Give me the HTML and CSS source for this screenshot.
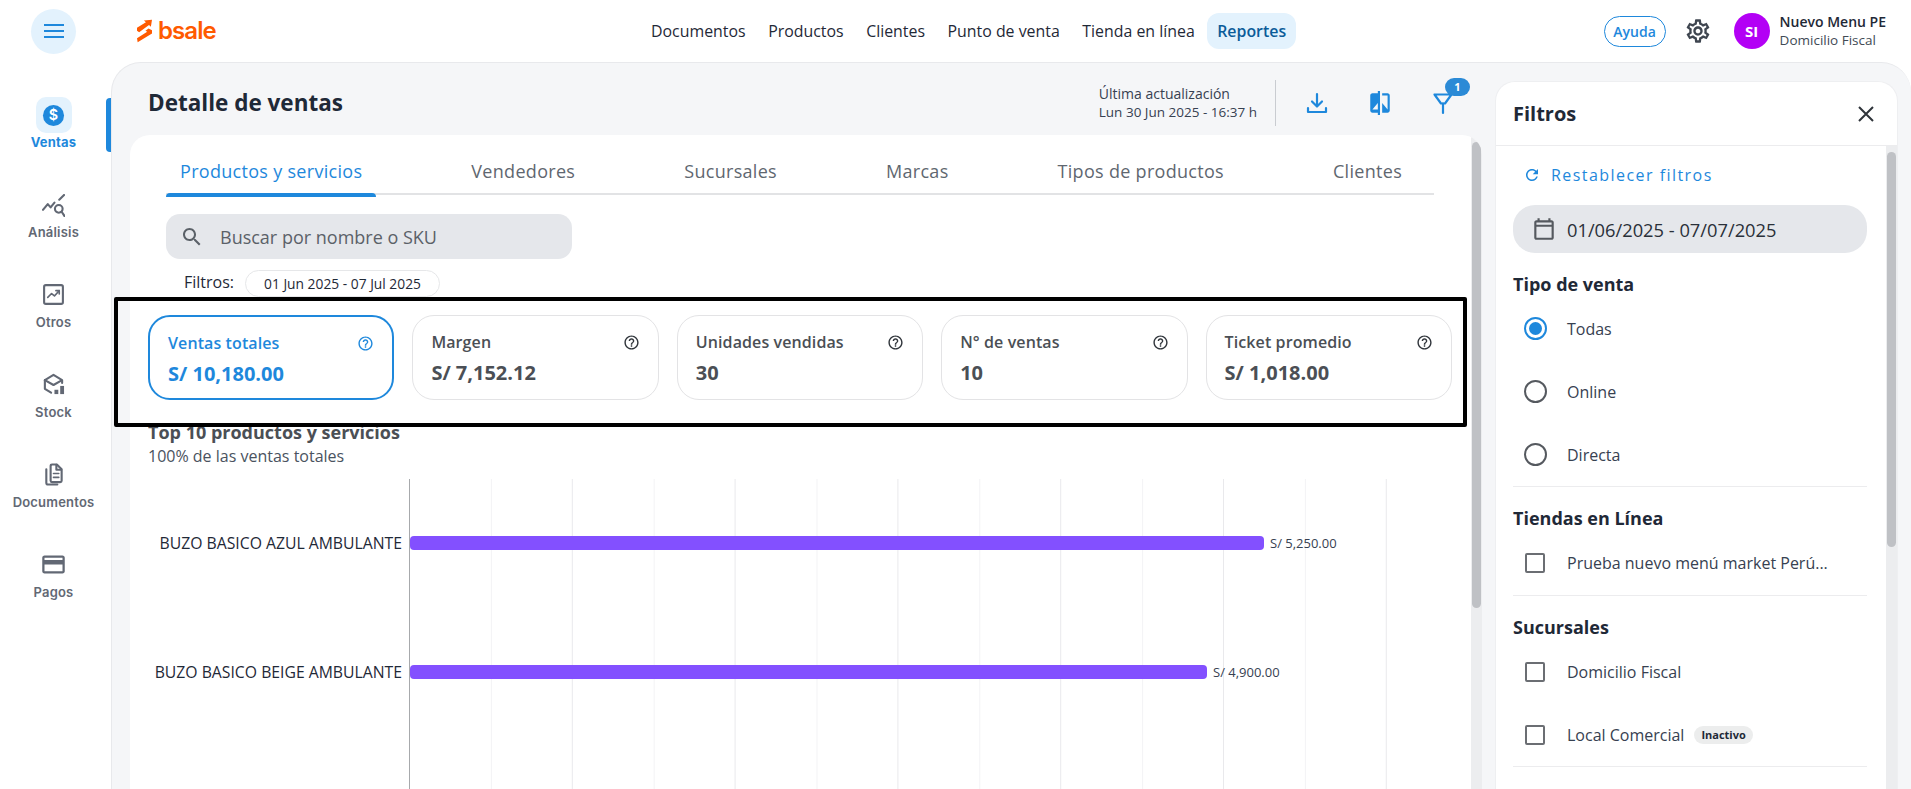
FILE: index.html
```html
<!DOCTYPE html>
<html lang="es">
<head>
<meta charset="utf-8">
<title>Detalle de ventas</title>
<link rel="stylesheet" href="styles.css">
</head>
<body>
<svg class="sprite" aria-hidden="true">
  <symbol id="help" viewBox="0 0 24 24"><path d="M11 18h2v-2h-2v2zm1-16C6.48 2 2 6.48 2 12s4.48 10 10 10 10-4.48 10-10S17.52 2 12 2zm0 18c-4.41 0-8-3.59-8-8s3.59-8 8-8 8 3.59 8 8-3.59 8-8 8zm0-14c-2.21 0-4 1.79-4 4h2c0-1.1.9-2 2-2s2 .9 2 2c0 2-3 1.75-3 5h2c0-2.25 3-2.5 3-5 0-2.21-1.79-4-4-4z"/></symbol>
</svg>

<header class="topbar">
  <div class="burger-slot">
    <button class="burger" aria-label="Menú"><span></span><span></span><span></span></button>
  </div>
  <div class="logo">
    <svg class="logo-mark" viewBox="0 0 16 24"><path d="M0 8.500 9.500 2.600 7.400.9 16 0l-1.200 7.400-2-1.700L2.300 13.200 0 11.800z"/><path d="M16 11.200v3.400L.7 24 0 19.600l10.900-6.700-1.900-1.200 3.300-2.300z"/></svg>
    <span class="logo-word">bsale</span>
  </div>
  <nav class="topnav">
    <a>Documentos</a><a>Productos</a><a>Clientes</a><a>Punto de venta</a><a>Tienda en línea</a><a class="is-active">Reportes</a>
  </nav>
  <div class="account">
    <span class="help-btn">Ayuda</span>
    <svg class="gear" viewBox="0 0 24 24"><path d="M19.43 12.98c.04-.32.07-.64.07-.98 0-.34-.03-.66-.07-.98l2.11-1.65c.19-.15.24-.42.12-.64l-2-3.46c-.09-.16-.26-.25-.44-.25-.06 0-.12.01-.17.03l-2.49 1c-.52-.4-1.08-.73-1.69-.98l-.38-2.65C14.46 2.18 14.25 2 14 2h-4c-.25 0-.46.18-.49.42l-.38 2.65c-.61.25-1.17.59-1.69.98l-2.49-1c-.06-.02-.12-.03-.18-.03-.17 0-.34.09-.43.25l-2 3.46c-.13.22-.07.49.12.64l2.11 1.65c-.04.32-.07.65-.07.98 0 .33.03.66.07.98l-2.11 1.65c-.19.15-.24.42-.12.64l2 3.46c.09.16.26.25.44.25.06 0 .12-.01.17-.03l2.49-1c.52.4 1.08.73 1.69.98l.38 2.65c.03.24.24.42.49.42h4c.25 0 .46-.18.49-.42l.38-2.65c.61-.25 1.17-.59 1.69-.98l2.49 1c.06.02.12.03.18.03.17 0 .34-.09.43-.25l2-3.46c.12-.22.07-.49-.12-.64l-2.11-1.65zm-1.98-1.71c.04.31.05.52.05.73 0 .21-.02.43-.05.73l-.14 1.13.89.7 1.08.84-.7 1.21-1.27-.51-1.04-.42-.9.68c-.43.32-.84.56-1.25.73l-1.06.43-.16 1.13-.2 1.35h-1.4l-.19-1.35-.16-1.13-1.06-.43c-.43-.18-.83-.41-1.23-.71l-.91-.7-1.06.43-1.27.51-.7-1.21 1.08-.84.89-.7-.14-1.13c-.03-.31-.05-.54-.05-.74s.02-.43.05-.73l.14-1.13-.89-.7-1.08-.84.7-1.21 1.27.51 1.04.42.9-.68c.43-.32.84-.56 1.25-.73l1.06-.43.16-1.13.2-1.35h1.39l.19 1.35.16 1.13 1.06.43c.43.18.83.41 1.23.71l.91.7 1.06-.43 1.27-.51.7 1.21-1.07.85-.89.7.14 1.13zM12 8c-2.21 0-4 1.79-4 4s1.79 4 4 4 4-1.79 4-4-1.79-4-4-4zm0 6c-1.1 0-2-.9-2-2s.9-2 2-2 2 .9 2 2-.9 2-2 2z"/></svg>
    <span class="avatar">SI</span>
    <div class="who"><strong>Nuevo Menu PE</strong><span>Domicilio Fiscal</span></div>
  </div>
</header>

<div class="shell">
  <aside class="sidebar">
    <a class="side-item is-active">
      <span class="side-icon"><svg class="dollar" viewBox="0 0 24 24"><circle cx="12" cy="12" r="11"/><text x="12" y="17.200" text-anchor="middle">$</text></svg></span>
      <span>Ventas</span>
    </a>
    <a class="side-item">
      <span class="side-icon"><svg class="stroke-icon" viewBox="0 0 24 24"><path d="M1 16.500 6 10.500l3 3.500 4-5"/><path d="M18 6l5-5"/><circle cx="17.500" cy="15.500" r="4"/><path d="M20.500 18.500 23.500 23"/></svg></span>
      <span>Análisis</span>
    </a>
    <a class="side-item">
      <span class="side-icon side-icon-up"><svg class="stroke-icon" viewBox="0 0 24 24"><rect x="2.200" y="2.200" width="19.600" height="19.600" rx="1.800"/><path class="thin" d="M6 15l4-4 3 2.500 5-5.500"/><path class="thin" d="M14.500 8H18v3.500"/></svg></span>
      <span>Otros</span>
    </a>
    <a class="side-item">
      <span class="side-icon side-icon-up"><svg class="stroke-icon" viewBox="0 0 24 24"><path d="M3 7.500 12 2l9 5.500v3"/><path d="M3 7.500 12 12.500l8-4.500"/><path d="M3 7.500V16.500L9.500 20.500"/><rect class="solid" x="13" y="17.500" width="4" height="4.500"/><rect class="solid" x="19" y="13.500" width="4" height="8.500"/></svg></span>
      <span>Stock</span>
    </a>
    <a class="side-item">
      <span class="side-icon side-icon-up"><svg class="stroke-icon" viewBox="0 0 24 24"><path d="M10.500 1.500h5l5 5v12a1.500 1.500 0 0 1-1.500 1.500H10.500A1.500 1.500 0 0 1 9 18.500V3a1.500 1.500 0 0 1 1.500-1.500z"/><path d="M15 2v5h5"/><path class="thin" d="M12 11h5.500M12 15h5.500"/><path d="M4.500 6.500V20.500a2 2 0 0 0 2 2H16"/></svg></span>
      <span>Documentos</span>
    </a>
    <a class="side-item">
      <span class="side-icon side-icon-up"><svg class="fill-icon" viewBox="0 0 24 24"><path d="M20 4H4c-1.110 0-1.990.89-1.990 2L2 18c0 1.110.89 2 2 2h16c1.110 0 2-.89 2-2V6c0-1.110-.89-2-2-2zm0 14H4v-6h16v6zm0-10H4V6h16v2z"/></svg></span>
      <span>Pagos</span>
    </a>
  </aside>

  <main class="panel">
    <section class="report">
      <div class="report-head">
        <h1>Detalle de ventas</h1>
        <div class="head-tools">
          <div class="updated"><span>Última actualización</span><span class="updated-date">Lun 30 Jun 2025 - 16:37 h</span></div>
          <span class="head-divider"></span>
          <svg class="tool tool-stroke" viewBox="0 0 24 24"><path d="M12 3v11.500"/><path d="M7 10.500l5 5 5-5"/><path d="M3 17v4h18v-4"/></svg>
          <svg class="tool tool-compare" viewBox="0 0 24 24"><path d="M10 3H5c-1.100 0-2 .9-2 2v14c0 1.100.9 2 2 2h5v2h2V1h-2v2zm0 15H5l5-6v6zm9-15h-5v2h5v13l-5-6v9h5c1.100 0 2-.9 2-2V5c0-1.100-.9-2-2-2z"/></svg>
          <span class="filter-tool">
            <svg class="tool tool-stroke" viewBox="0 0 24 24"><path d="M3.500 3.500h17L14 12.500h-4z"/><path d="M12 12.500V22"/></svg>
            <span class="filter-badge">1</span>
          </span>
        </div>
      </div>

      <div class="card">
        <div class="card-body">
          <div class="tabs">
            <a class="tab is-active">Productos y servicios</a>
            <a class="tab">Vendedores</a>
            <a class="tab">Sucursales</a>
            <a class="tab">Marcas</a>
            <a class="tab">Tipos de productos</a>
            <a class="tab">Clientes</a>
          </div>
          <div class="search">
            <svg viewBox="0 0 24 24"><path d="M15.500 14h-.79l-.28-.27C15.410 12.590 16 11.110 16 9.500 16 5.910 13.090 3 9.500 3S3 5.910 3 9.500 5.910 16 9.500 16c1.610 0 3.090-.59 4.230-1.570l.27.28v.79l5 4.990L20.490 19l-4.990-5zm-6 0C7.010 14 5 11.990 5 9.500S7.010 5 9.500 5 14 7.010 14 9.500 11.990 14 9.500 14z"/></svg>
            <span>Buscar por nombre o SKU</span>
          </div>
          <div class="applied">
            <span class="applied-label">Filtros:</span>
            <span class="chip">01 Jun 2025 - 07 Jul 2025</span>
          </div>

          <div class="kpis">
            <div class="kpi is-active">
              <div class="kpi-top"><span>Ventas totales</span><svg><use href="#help"/></svg></div>
              <div class="kpi-value">S/ 10,180.00</div>
            </div>
            <div class="kpi">
              <div class="kpi-top"><span>Margen</span><svg><use href="#help"/></svg></div>
              <div class="kpi-value">S/ 7,152.12</div>
            </div>
            <div class="kpi">
              <div class="kpi-top"><span>Unidades vendidas</span><svg><use href="#help"/></svg></div>
              <div class="kpi-value">30</div>
            </div>
            <div class="kpi">
              <div class="kpi-top"><span>N° de ventas</span><svg><use href="#help"/></svg></div>
              <div class="kpi-value">10</div>
            </div>
            <div class="kpi">
              <div class="kpi-top"><span>Ticket promedio</span><svg><use href="#help"/></svg></div>
              <div class="kpi-value">S/ 1,018.00</div>
            </div>
          </div>

          <h2 class="top-title">Top 10 productos y servicios</h2>
          <p class="top-sub">100% de las ventas totales</p>

          <div class="chart">
            <div class="chart-labels">
              <div>BUZO BASICO AZUL AMBULANTE</div>
              <div>BUZO BASICO BEIGE AMBULANTE</div>
            </div>
            <div class="chart-plot">
              <div class="chart-row"><span class="bar" style="width:854px"></span><span class="bar-value">S/ 5,250.00</span></div>
              <div class="chart-row"><span class="bar" style="width:797px"></span><span class="bar-value">S/ 4,900.00</span></div>
            </div>
          </div>
        </div>
        <div class="scroll scroll-main"><span></span></div>
      </div>
    </section>

    <aside class="filters">
      <div class="filters-head">
        <h2>Filtros</h2>
        <svg viewBox="0 0 24 24"><path d="M5 5l14 14M19 5 5 19"/></svg>
      </div>
      <div class="filters-main">
        <div class="filters-body">
          <a class="reset">
            <svg viewBox="0 0 24 24"><path d="M17.650 6.350C16.200 4.900 14.210 4 12 4c-4.420 0-7.990 3.580-7.990 8s3.570 8 7.990 8c3.730 0 6.840-2.550 7.730-6h-2.080c-.82 2.330-3.040 4-5.650 4-3.310 0-6-2.690-6-6s2.690-6 6-6c1.660 0 3.140.69 4.220 1.780L13 11h7V4l-2.350 2.350z"/></svg>
            <span>Restablecer filtros</span>
          </a>
          <div class="date-field">
            <svg viewBox="0 0 24 24"><path d="M19 4h-1V2h-2v2H8V2H6v2H5c-1.110 0-1.990.9-1.990 2L3 20c0 1.100.89 2 2 2h14c1.100 0 2-.9 2-2V6c0-1.100-.9-2-2-2zm0 16H5V10h14v10zm0-12H5V6h14v2z"/></svg>
            <span>01/06/2025 - 07/07/2025</span>
          </div>
          <div class="group">
            <h3>Tipo de venta</h3>
            <label class="opt"><span class="radio is-on"></span>Todas</label>
            <label class="opt"><span class="radio"></span>Online</label>
            <label class="opt"><span class="radio"></span>Directa</label>
          </div>
          <div class="group group-loose">
            <h3>Tiendas en Línea</h3>
            <label class="opt"><span class="check"></span>Prueba nuevo menú market Perú...</label>
          </div>
          <div class="group">
            <h3>Sucursales</h3>
            <label class="opt"><span class="check"></span>Domicilio Fiscal</label>
            <label class="opt"><span class="check"></span>Local Comercial<span class="tag">Inactivo</span></label>
          </div>
          <div class="group">
            <h3>Clientes</h3>
          </div>
        </div>
        <div class="scroll scroll-side"><span></span></div>
      </div>
    </aside>
  </main>
</div>

<div class="highlight"></div>
</body>
</html>
```

FILE: styles.css
```css
* { box-sizing: border-box; }
html, body { height: 100%; }
body {
  margin: 0;
  width: 1911px;
  height: 789px;
  overflow: hidden;
  background: #fff;
  color: #1f2937;
  font-family: "Open Sans", "Noto Sans", sans-serif;
  position: relative;
}
h1, h2, h3, p { margin: 0; }
.sprite { position: absolute; width: 0; height: 0; }

/* top bar */
.topbar { height: 62px; display: flex; align-items: center; }
.burger-slot { width: 107px; display: flex; justify-content: center; }
.burger {
  width: 45px; height: 45px; border: 0; border-radius: 50%;
  background: #e3f2fd; padding: 0;
  display: flex; flex-direction: column; align-items: center; justify-content: center; gap: 4px;
}
.burger span { width: 20px; height: 2px; background: #1e88dc; display: block; }
.logo { margin-left: 30px; display: flex; align-items: center; gap: 6px; width: 80px; }
.logo-mark { width: 15px; height: 24px; fill: #ff5a00; flex: none; }
.logo-word { font-family: "Inter", sans-serif; font-weight: 600; font-size: 24px; line-height: 24px; color: #ff5a00; letter-spacing: -.9px; }
.topnav { margin-left: 424px; display: flex; align-items: center; gap: 2.500px; }
.topnav a { padding: 0 10px; height: 36px; line-height: 36px; font-size: 15.900px; color: #1f2937; border-radius: 12px; white-space: nowrap; }
.topnav a.is-active { background: #e3f2fd; color: #0b5c99; font-weight: 600; }
.account { margin-left: auto; padding-right: 25px; display: flex; align-items: center; }
.help-btn {
  width: 62px; height: 31px; border: 1px solid #1e88dc; border-radius: 16px;
  color: #1e88dc; font-size: 14px; font-weight: 600; text-align: center; line-height: 29px;
}
.gear { width: 28px; height: 28px; margin-left: 18px; fill: #3f4650; }
.avatar {
  width: 36px; height: 36px; margin-left: 22px; border-radius: 50%;
  background: #b300f5; color: #fff; font-size: 15px; font-weight: 700;
  text-align: center; line-height: 36px;
}
.who { margin-left: 10px; display: flex; flex-direction: column; font-size: 13.500px; line-height: 18px; }
.who strong { font-size: 14px; font-weight: 600; color: #1f2937; }
.who span { color: #414a55; }

/* shell */
.shell { display: flex; height: 727px; }
.sidebar { width: 111px; padding: 35px 4px 0 0; flex: none; display: flex; flex-direction: column; }
.side-item {
  position: relative; height: 90px; display: flex; flex-direction: column; align-items: center;
  font-family: "Inter", sans-serif; font-weight: 600; font-size: 13px; line-height: 18px; color: #626874; letter-spacing: .2px;
}
.side-icon { width: 36px; height: 36px; border-radius: 10px; display: flex; align-items: center; justify-content: center; }
.side-icon-up { padding-bottom: 2px; }
.side-item.is-active { color: #1e88dc; font-weight: 700; }
.side-item.is-active .side-icon { background: #e3f2fd; }
.side-item.is-active::after {
  content: ""; position: absolute; top: 1px; right: -4px; width: 5px; height: 54px;
  background: #1e88dc; border-radius: 4px 0 0 4px;
}
.side-icon svg { width: 23px; height: 23px; }
.dollar circle { fill: #1e88dc; }
.dollar text { fill: #fff; font-family: "Inter", sans-serif; font-size: 15px; font-weight: 600; }
.stroke-icon { fill: none; stroke: #626874; stroke-width: 2.200; stroke-linejoin: round; stroke-linecap: round; }
.stroke-icon .thin { stroke-width: 1.700; }
.stroke-icon .solid { fill: #626874; stroke: none; }
.side-icon .fill-icon { fill: #626874; width: 27px; height: 27px; flex: none; }

/* panel */
.panel {
  flex: 1; min-width: 0; display: flex; align-items: flex-start;
  background: #f5f6f8; border: 1px solid #e8e9ec; border-bottom: 0; border-right: 0;
  border-radius: 30px 30px 0 0;
}
.report { width: 1352px; margin-left: 18px; height: 100%; display: flex; flex-direction: column; flex: none; }
.report-head { height: 72px; flex: none; padding: 8px 27px 0 18px; display: flex; align-items: center; justify-content: space-between; }
h1 { font-size: 22.500px; font-weight: 700; color: #1f2937; line-height: 32px; }
.head-tools { display: flex; align-items: center; }
.updated { display: flex; flex-direction: column; font-size: 14px; line-height: 18px; color: #374151; }
.updated-date { font-size: 13.500px; }
.head-divider { width: 1px; height: 46px; background: #c9ccd1; margin: 0 29px 0 18px; }
.tool { width: 24px; height: 24px; fill: #1e88dc; display: block; }
.tool + .tool, .filter-tool { margin-left: 39px; }
.tool-compare { width: 26px; height: 26px; margin-right: -1px; }
.tool + .tool-compare { margin-left: 38px; }
.tool-stroke { fill: none; stroke: #1e88dc; stroke-width: 2.200; stroke-linejoin: round; stroke-linecap: round; }
.filter-tool { position: relative; display: block; width: 24px; height: 24px; }
.filter-badge {
  position: absolute; top: -13px; left: 14px; width: 25px; height: 18px; border-radius: 9px;
  background: #2b8ad6; color: #fff; font-size: 11px; font-weight: 700; text-align: center; line-height: 18px;
}

.card { flex: 1; min-height: 0; display: flex; background: #fff; border-radius: 20px 20px 0 0; overflow: hidden; }
.card-body { flex: 1; min-width: 0; padding: 0 19px 0 18px; overflow: hidden; }
.scroll { flex: none; background: #ecedef; display: flex; justify-content: center; }
.scroll span { display: block; background: #bfc1c5; border-radius: 5px; }
.scroll-main { width: 11px; padding-top: 7px; }
.scroll-main span { width: 9px; height: 466px; }
.scroll-side { width: 11px; padding-top: 6px; }
.scroll-side span { width: 9px; height: 395px; }

/* tabs */
.tabs {
  margin: 0 18px; height: 60px; padding-top: 20px; display: flex; gap: 81px;
  border-bottom: 2px solid #e2e3e5;
}
.tab { padding: 0 14px; height: 40px; line-height: 32px; font-size: 18px; font-weight: 500; letter-spacing: .3px; color: #5f6770; white-space: nowrap; position: relative; }
.tab.is-active { color: #1e88dc; }
.tab.is-active::after {
  content: ""; position: absolute; left: 0; right: 0; bottom: -2px; height: 4px;
  background: #1e88dc; border-radius: 4px 4px 0 0;
}

.search {
  margin: 19px 0 0 18px; width: 406px; height: 45px; border-radius: 14px; background: #e5e7eb;
  display: flex; align-items: center; padding-left: 14px; font-size: 18px; color: #5b6168;
}
.search svg { width: 24px; height: 24px; fill: #5b6168; margin-right: 16px; }
.applied { margin: 11px 0 0 36px; height: 27px; display: flex; align-items: center; gap: 11px; }
.applied-label { font-size: 16px; color: #1f2937; padding-bottom: 3px; }
.chip {
  height: 27px; padding: 0 18px; border: 1px solid #e6e7e9; border-radius: 14px; font-size: 13.800px;
  line-height: 25px; color: #1f2937; white-space: nowrap;
}

/* kpis */
.kpis { margin-top: 18px; display: grid; grid-template-columns: repeat(5, 1fr); gap: 18px; }
.kpi { height: 85px; border: 1px solid #e3e3e5; border-radius: 22px; padding: 15px 18px 0; color: #4b4f55; }
.kpi.is-active { border: 2px solid #1e88dc; color: #1e88dc; padding: 15px 18px 0; }
.kpi-top { display: flex; align-items: center; justify-content: space-between; font-size: 16px; font-weight: 600; letter-spacing: .1px; line-height: 22px; }
.kpi-top svg { width: 17px; height: 17px; fill: #2f343a; }
.kpi.is-active .kpi-top svg { fill: #1e88dc; }
.kpi-value { margin-top: 6px; font-size: 20px; font-weight: 700; line-height: 28px; }

.top-title { margin-top: 20px; font-size: 18px; font-weight: 700; color: #4b4f55; line-height: 24px; }
.top-sub { font-size: 16px; line-height: 24px; color: #4a5360; }

/* chart */
.chart { margin-top: 11px; display: flex; height: 320px; }
.chart-labels { width: 261px; flex: none; padding-right: 7px; font-size: 15.750px; color: #1f2937; text-align: right; }
.chart-labels div { height: 128.500px; line-height: 128.500px; white-space: nowrap; }
.chart-plot {
  width: 978px; border-left: 1px solid #a7a9ac;
  background-image:
    linear-gradient(90deg, transparent 80.400px, #f3f3f5 80.400px, #f3f3f5 81.400px, transparent 81.400px, transparent 161.800px, #e9e9ec 161.800px, #e9e9ec 162.800px, transparent 162.800px);
  background-size: 162.800px 100%;
}
.chart-row { height: 128.500px; display: flex; align-items: center; }
.bar { height: 14px; background: #8350ff; border-radius: 4px; display: block; }
.bar-value { margin-left: 6px; font-size: 13px; color: #374151; white-space: nowrap; }

/* filters */
.filters {
  width: 403px; margin: 18px 13px 0 13px; height: 709px; flex: none; background: #fff;
  border: 1px solid #eeeff1; border-bottom: 0; border-radius: 20px 20px 0 0; overflow: hidden;
  display: flex; flex-direction: column;
}
.filters-head { height: 64px; flex: none; display: flex; align-items: center; justify-content: space-between; padding: 0 19px 0 17px; border-bottom: 1px solid #ececee; }
.filters-head h2 { font-size: 20px; font-weight: 700; color: #1f2937; }
.filters-head svg { width: 24px; height: 24px; fill: none; stroke: #2f343a; stroke-width: 2; }
.filters-main { flex: 1; min-height: 0; display: flex; }
.filters-body { flex: 1; min-width: 0; padding: 0 19px 0 17px; overflow: hidden; }
.reset { height: 59px; padding: 0 0 2px 10px; display: flex; align-items: center; gap: 10px; color: #1e88dc; font-size: 16px; font-weight: 500; letter-spacing: 1.450px; }
.reset svg { width: 18px; height: 18px; fill: #1e88dc; }
.date-field { height: 48px; border-radius: 22px; background: #e5e7eb; display: flex; align-items: center; padding-left: 18px; font-size: 18.300px; color: #2a3039; }
.date-field svg { width: 26px; height: 26px; fill: #55595f; margin-right: 10px; }
.group { padding: 15px 0 0; border-bottom: 1px solid #ececee; }
.group-loose { padding-bottom: 1px; }
.group h3 { font-size: 18px; font-weight: 700; color: #1f2937; line-height: 32px; margin-bottom: -3px; }
.opt { height: 63px; display: flex; align-items: center; font-size: 16px; color: #374151; }
.radio {
  width: 23px; height: 23px; margin: 0 20px 0 11px; border-radius: 50%; border: 2px solid #55595f; flex: none;
}
.radio.is-on { border-color: #1e88dc; position: relative; }
.radio.is-on::after { content: ""; position: absolute; inset: 3px; border-radius: 50%; background: #1e88dc; }
.check { width: 20px; height: 20px; margin: 0 22px 0 12px; border: 2px solid #6b6e73; border-radius: 2px; flex: none; }
.tag { margin-left: 10px; height: 18px; padding: 0 7px; border-radius: 9px; background: #eceded; font-size: 11px; font-weight: 700; line-height: 18px; color: #1f2937; }

/* annotation drawn over the page */
.highlight {
  position: absolute; left: 114px; top: 297px; width: 1353px; height: 130px;
  border: 4px solid #000; border-radius: 2px; pointer-events: none;
}
```
